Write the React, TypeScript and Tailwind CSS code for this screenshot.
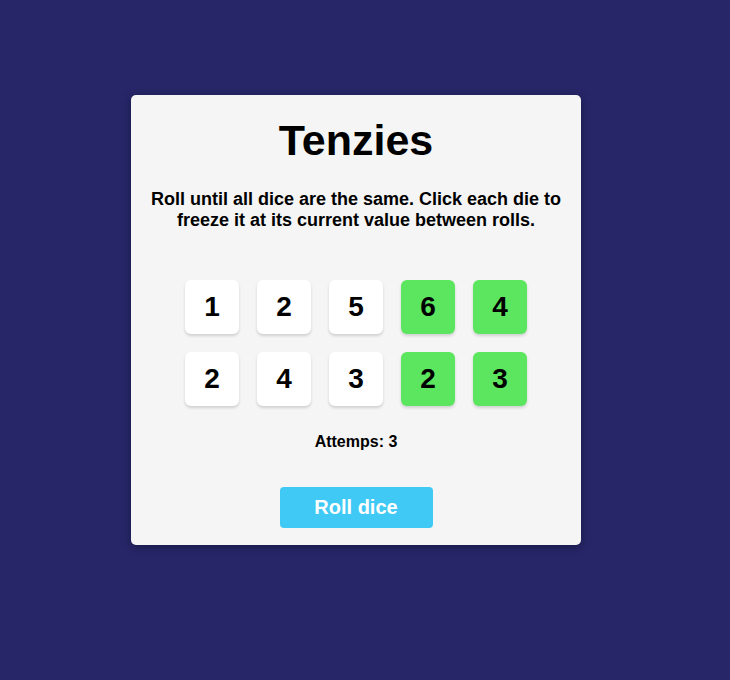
import React, { useState } from 'react';

interface Die {
  id: number;
  value: number;
  isHeld: boolean;
}

const initialDice: Die[] = [
  { id: 1, value: 1, isHeld: false },
  { id: 2, value: 2, isHeld: false },
  { id: 3, value: 5, isHeld: false },
  { id: 4, value: 6, isHeld: true },
  { id: 5, value: 4, isHeld: true },
  { id: 6, value: 2, isHeld: false },
  { id: 7, value: 4, isHeld: false },
  { id: 8, value: 3, isHeld: false },
  { id: 9, value: 2, isHeld: true },
  { id: 10, value: 3, isHeld: true },
];

const App: React.FC = () => {
  const [dice, setDice] = useState<Die[]>(initialDice);
  const [attempts, setAttempts] = useState(3);

  const holdDie = (id: number) => {
    setDice(prev => prev.map(d => (d.id === id ? { ...d, isHeld: !d.isHeld } : d)));
  };

  const rollDice = () => {
    setDice(prev =>
      prev.map(d => (d.isHeld ? d : { ...d, value: Math.ceil(Math.random() * 6) }))
    );
    setAttempts(a => a + 1);
  };

  return (
    <div className="min-h-screen w-full bg-[#262669] pt-[95px] pl-[131px] font-['Liberation_Sans',Arial,sans-serif]">
      <main className="w-[450px] h-[450px] bg-[#f5f5f5] rounded-[5px] shadow-[0_2px_8px_rgba(0,0,0,0.35)] flex flex-col items-center px-4 pt-[21px]">
        {/* Header */}
        <h1 className="text-[43px] font-bold leading-[1.15] text-black">Tenzies</h1>
        <p className="mt-[24px] text-[18px] font-bold leading-[21px] text-black text-center">
          Roll until all dice are the same. Click each die to freeze it at its current value between rolls.
        </p>

        {/* Dice */}
        <div className="mt-[49px] grid grid-cols-5 gap-[18px]">
          {dice.map(die => (
            <button
              key={die.id}
              onClick={() => holdDie(die.id)}
              className={`w-[54px] h-[54px] rounded-[6px] flex items-center justify-center text-[28px] font-bold text-black shadow-[0_2px_3px_rgba(0,0,0,0.15)] cursor-pointer ${
                die.isHeld ? 'bg-[#5ce65f]' : 'bg-white'
              }`}
            >
              {die.value}
            </button>
          ))}
        </div>

        <p className="mt-[27px] text-[16px] font-bold leading-[1.15] text-black">Attemps: {attempts}</p>

        <button
          onClick={rollDice}
          className="mt-[35px] w-[153px] h-[41px] rounded-[4px] bg-[#40c9f5] text-white text-[20px] font-bold cursor-pointer"
        >
          Roll dice
        </button>
      </main>
    </div>
  );
};

export default App;
